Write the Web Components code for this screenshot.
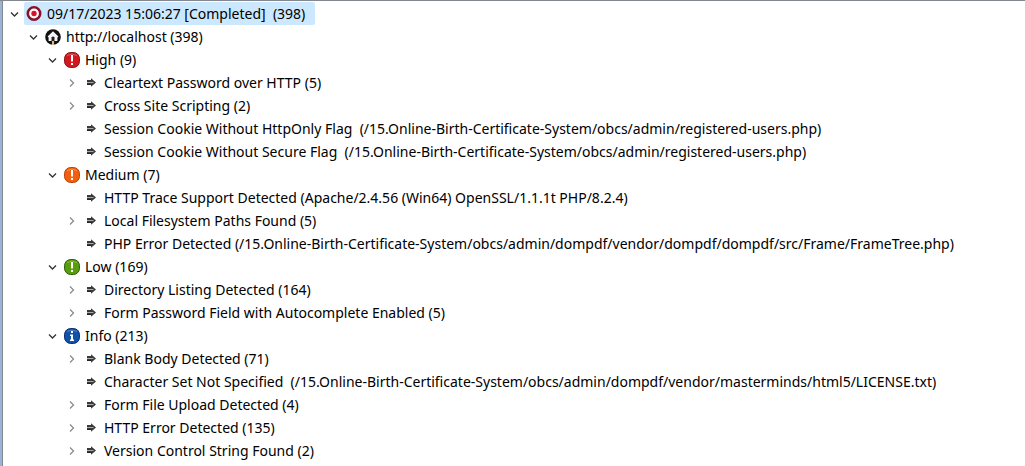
<!DOCTYPE html>
<html lang="en">
<head>
<meta charset="utf-8">
<title>Scan alerts</title>
<style>
html, body { margin: 0; height: 100%; }
body { overflow: hidden; background: #fff; color: #000; font: 14px/23px "Noto Sans", "Open Sans", sans-serif; }
</style>
</head>
<body>
<alert-tree aria-label="Scan alerts">
  <tree-item icon="scan" open selected>
    <span slot="label">09/17/2023 15:06:27 [Completed]  (398)</span>
    <tree-item icon="host" open>
      <span slot="label">http://localhost (398)</span>
      <tree-item icon="high" open>
        <span slot="label">High (9)</span>
        <tree-item icon="arrow" closed><span slot="label">Cleartext Password over HTTP (5)</span></tree-item>
        <tree-item icon="arrow" closed><span slot="label">Cross Site Scripting (2)</span></tree-item>
        <tree-item icon="arrow"><span slot="label">Session Cookie Without HttpOnly Flag  (/15.Online-Birth-Certificate-System/obcs/admin/registered-users.php)</span></tree-item>
        <tree-item icon="arrow"><span slot="label">Session Cookie Without Secure Flag  (/15.Online-Birth-Certificate-System/obcs/admin/registered-users.php)</span></tree-item>
      </tree-item>
      <tree-item icon="medium" open>
        <span slot="label">Medium (7)</span>
        <tree-item icon="arrow"><span slot="label">HTTP Trace Support Detected (Apache/2.4.56 (Win64) OpenSSL/1.1.1t PHP/8.2.4)</span></tree-item>
        <tree-item icon="arrow" closed><span slot="label">Local Filesystem Paths Found (5)</span></tree-item>
        <tree-item icon="arrow"><span slot="label">PHP Error Detected (/15.Online-Birth-Certificate-System/obcs/admin/dompdf/vendor/dompdf/dompdf/src/Frame/FrameTree.php)</span></tree-item>
      </tree-item>
      <tree-item icon="low" open>
        <span slot="label">Low (169)</span>
        <tree-item icon="arrow" closed><span slot="label">Directory Listing Detected (164)</span></tree-item>
        <tree-item icon="arrow" closed><span slot="label">Form Password Field with Autocomplete Enabled (5)</span></tree-item>
      </tree-item>
      <tree-item icon="info" open>
        <span slot="label">Info (213)</span>
        <tree-item icon="arrow" closed><span slot="label">Blank Body Detected (71)</span></tree-item>
        <tree-item icon="arrow"><span slot="label">Character Set Not Specified  (/15.Online-Birth-Certificate-System/obcs/admin/dompdf/vendor/masterminds/html5/LICENSE.txt)</span></tree-item>
        <tree-item icon="arrow" closed><span slot="label">Form File Upload Detected (4)</span></tree-item>
        <tree-item icon="arrow" closed><span slot="label">HTTP Error Detected (135)</span></tree-item>
        <tree-item icon="arrow" closed><span slot="label">Version Control String Found (2)</span></tree-item>
      </tree-item>
    </tree-item>
  </tree-item>
  <tree-item icon="scan"></tree-item>
</alert-tree>

<script>
const badge = (fill, edge, mark) => `
  <rect x=".5" y=".5" width="15" height="15" rx="6.2" fill="${fill}" stroke="${edge}"/>
  <path d="M3 3.5Q8 .5 13 3.5" fill="none" stroke="#fff" stroke-opacity=".3"/>${mark}`;
const bang = '<path d="M7 3h2v6.5H7zM7 11h2v2H7z" fill="#fff"/>';
const ICONS = {
  scan: `<circle cx="8" cy="7.5" r="6.2" fill="#fff" stroke="#8d1029" stroke-width="2.6"/>
    <circle cx="8" cy="7.5" r="2.7" fill="#d3122e"/>`,
  host: `<circle cx="8" cy="8" r="7.8" fill="#111"/>
    <path d="M8 2.2 13.4 7.6 12.4 8.6V12H3.6V8.6L2.6 7.6z" fill="#f4f4f4"/>
    <path d="M6.5 14V8.5Q8 6.5 9.5 8.5V14z" fill="#222"/>
    <path d="M7 12h2v4H7z" fill="#eeb46d"/>`,
  high: badge('#d3171f', '#8c1319', bang),
  medium: badge('#f2600f', '#b9430b', bang),
  low: badge('#579d0c', '#315e0b', bang),
  info: badge('#1251a8', '#0b2f70', '<path d="M7 3h2v2H7zM6 6.5h3v5h1V13H6v-1.5h1V8H6z" fill="#fff"/>'),
  arrow: `<path d="M4 5h4V3.2L13 7.5 8 11.8V10H4z" fill="#3a3a3a"/>
    <path d="M4 7.5h6.5" stroke="#aaa"/><path d="M4 9.5h4" stroke="#222"/>`
};

class AlertTree extends HTMLElement {
  constructor() {
    super();
    this.attachShadow({ mode: 'open' }).innerHTML = `
      <style>
        :host { display: flex; box-sizing: border-box; height: 100%; overflow: hidden;
          background: #fff; border-top: 1px solid #828790; }
        .splitter { flex: none; width: 2px; background: #9ab4d6; border-right: 1px solid #828790; }
        .items { flex: 1; min-width: 0; padding: 1px 0 0 4px; }
      </style>
      <div class="splitter"></div>
      <div class="items"><slot></slot></div>`;
  }
  connectedCallback() { this.setAttribute('role', 'tree'); }
}

class TreeItem extends HTMLElement {
  constructor() {
    super();
    this.attachShadow({ mode: 'open' });
  }
  connectedCallback() {
    const open = this.hasAttribute('open');
    const expandable = open || this.hasAttribute('closed');
    this.setAttribute('role', 'treeitem');
    if (expandable) this.setAttribute('aria-expanded', open);
    this.shadowRoot.innerHTML = `
      <style>
        :host { display: block; }
        .row { display: flex; height: 23px; align-items: center; }
        button, .gap { flex: none; width: 16px; height: 16px; margin-right: 1px; }
        button { padding: 0; border: 0; background: none; color: #333; }
        button.closed { color: #8c8c8c; }
        svg { display: block; flex: none; width: 16px; height: 16px; }
        .label { display: flex; align-items: center; gap: 5px; height: 23px; padding: 0 10px 0 2px;
          border-radius: 2px; white-space: pre; }
        :host([selected]) .label { background: #cce8ff; }
        .children { margin-left: 19px; }
        :host([closed]) .children { display: none; }
      </style>
      <div class="row">
        ${expandable ? `<button type="button" class="${open ? 'open' : 'closed'}" aria-label="${open ? 'Collapse' : 'Expand'}">
          <svg viewBox="0 0 16 16" fill="none" stroke="currentColor" stroke-width="1.3">
            <path d="${open ? 'M4 6.5 7.5 10 11 6.5' : 'M6 4.5 9.5 8 6 11.5'}"/></svg></button>` : '<span class="gap"></span>'}
        <div class="label"><svg viewBox="0 0 16 16" aria-hidden="true">${ICONS[this.getAttribute('icon')]}</svg><slot name="label"></slot></div>
      </div>
      <div class="children" role="group"><slot></slot></div>`;
    const button = this.shadowRoot.querySelector('button');
    if (button) button.onclick = () => {
      this.toggleAttribute('open', !open);
      this.toggleAttribute('closed', open);
      this.connectedCallback();
    };
  }
}

customElements.define('alert-tree', AlertTree);
customElements.define('tree-item', TreeItem);
</script>
</body>
</html>
